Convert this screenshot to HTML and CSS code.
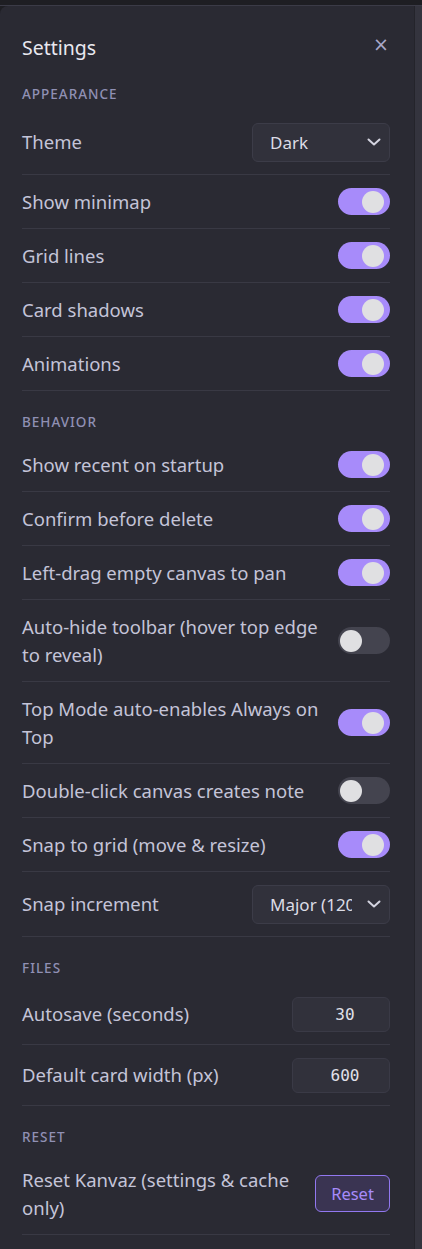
FILE: index.html
```html
<!DOCTYPE html>
<html>
<head>
<meta charset="utf-8">
<link rel="stylesheet" href="styles.css">
</head>
<body>
<div class="frame">
  <div class="panel">
    <div class="header">
      <h1 class="title">Settings</h1>
      <span class="close">×</span>
    </div>

    <div class="section-label">Appearance</div>
    <div class="row">
      <span class="label">Theme</span>
      <div class="select"><span class="select-text">Dark</span><svg class="chev" width="14" height="8" viewBox="0 0 14 8"><path d="M1.5 1.5 L7 6.5 L12.5 1.5" fill="none" stroke="#d4d4e0" stroke-width="2" stroke-linecap="round" stroke-linejoin="round"/></svg></div>
    </div>
    <div class="row"><span class="label">Show minimap</span><span class="toggle on"><span class="knob"></span></span></div>
    <div class="row"><span class="label">Grid lines</span><span class="toggle on"><span class="knob"></span></span></div>
    <div class="row"><span class="label">Card shadows</span><span class="toggle on"><span class="knob"></span></span></div>
    <div class="row"><span class="label">Animations</span><span class="toggle on"><span class="knob"></span></span></div>

    <div class="section-label">Behavior</div>
    <div class="row"><span class="label">Show recent on startup</span><span class="toggle on"><span class="knob"></span></span></div>
    <div class="row"><span class="label">Confirm before delete</span><span class="toggle on"><span class="knob"></span></span></div>
    <div class="row"><span class="label">Left-drag empty canvas to pan</span><span class="toggle on"><span class="knob"></span></span></div>
    <div class="row"><span class="label">Auto-hide toolbar (hover top edge to reveal)</span><span class="toggle"><span class="knob"></span></span></div>
    <div class="row"><span class="label">Top Mode auto-enables Always on Top</span><span class="toggle on"><span class="knob"></span></span></div>
    <div class="row"><span class="label">Double-click canvas creates note</span><span class="toggle"><span class="knob"></span></span></div>
    <div class="row"><span class="label">Snap to grid (move &amp; resize)</span><span class="toggle on"><span class="knob"></span></span></div>
    <div class="row">
      <span class="label">Snap increment</span>
      <div class="select"><span class="select-text">Major (120px)</span><svg class="chev" width="14" height="8" viewBox="0 0 14 8"><path d="M1.5 1.5 L7 6.5 L12.5 1.5" fill="none" stroke="#d4d4e0" stroke-width="2" stroke-linecap="round" stroke-linejoin="round"/></svg></div>
    </div>

    <div class="section-label">Files</div>
    <div class="row"><span class="label">Autosave (seconds)</span><span class="num">30</span></div>
    <div class="row"><span class="label">Default card width (px)</span><span class="num">600</span></div>

    <div class="section-label">Reset</div>
    <div class="row"><span class="label">Reset Kanvaz (settings &amp; cache only)</span><button class="reset">Reset</button></div>
  </div>
  <div class="scrollbar"></div>
</div>
</body>
</html>
```

FILE: styles.css
```css
html, body {
  margin: 0;
  padding: 0;
}
body {
  background: #1e1e23;
  font-family: "Noto Sans", "Open Sans", sans-serif;
  height: 1249px;
  overflow: hidden;
}
.frame {
  display: flex;
  margin-top: 5px;
  height: 1244px;
  border-top: 1px solid #3b3b47;
}
.panel {
  flex: 1;
  background: #2a2a33;
  border-top-left-radius: 8px;
  padding: 0 24px 0 22px;
}
.scrollbar {
  width: 7px;
  background: #34343e;
  border-left: 1px solid #24242b;
}
.header {
  display: flex;
  justify-content: space-between;
  align-items: center;
  height: 57px;
}
.title {
  margin: 0;
  font-size: 19.5px;
  font-weight: 400;
  color: #e8e8f0;
  padding-top: 26px;
  line-height: 24px;
}
.close {
  color: #a8a8c8;
  font-size: 19px;
  line-height: 20px;
  padding-top: 18px;
  margin-right: 1px;
  font-family: "DejaVu Sans", sans-serif;
}
.section-label {
  text-transform: uppercase;
  font-size: 13.5px;
  letter-spacing: 1px;
  color: #9090b4;
  font-weight: 500;
  line-height: 16px;
  padding-top: 23px;
  padding-bottom: 8px;
}
.row {
  display: flex;
  justify-content: space-between;
  align-items: center;
  gap: 10px;
  padding: 12.5px 0;
  border-bottom: 1px solid #393944;
}
.label {
  font-size: 18.5px;
  line-height: 28px;
  color: #c4c4d8;
}
.select {
  flex: none;
  width: 138px;
  height: 39px;
  box-sizing: border-box;
  background: #31313b;
  border: 1px solid #3c3c48;
  border-radius: 6px;
  display: flex;
  align-items: center;
  padding: 0 8px 0 17px;
  gap: 15px;
}
.select-text {
  flex: 1;
  overflow: hidden;
  white-space: nowrap;
  font-size: 17px;
  color: #dcdce6;
}
.chev {
  flex: none;
}
.toggle {
  flex: none;
  width: 52px;
  height: 27px;
  border-radius: 14px;
  background: #44444f;
  position: relative;
}
.toggle.on {
  background: #a78bfa;
}
.knob {
  position: absolute;
  top: 2.5px;
  left: 2px;
  width: 22px;
  height: 22px;
  border-radius: 50%;
  background: #e0e0e2;
}
.toggle.on .knob {
  transform: translateX(22px);
}
.num {
  flex: none;
  width: 98px;
  height: 35px;
  box-sizing: border-box;
  background: #31313b;
  border: 1px solid #3a3a46;
  border-radius: 6px;
  display: flex;
  align-items: center;
  justify-content: center;
  padding-left: 8px;
  font-family: "DejaVu Sans Mono", monospace;
  font-size: 16px;
  color: #e0e0ea;
}
.reset {
  flex: none;
  width: 75px;
  height: 37px;
  background: #3a3452;
  border: 1px solid #9278f0;
  border-radius: 6px;
  color: #a78bfa;
  font-family: "Noto Sans", "Open Sans", sans-serif;
  font-size: 16.5px;
  padding: 0;
}
```
